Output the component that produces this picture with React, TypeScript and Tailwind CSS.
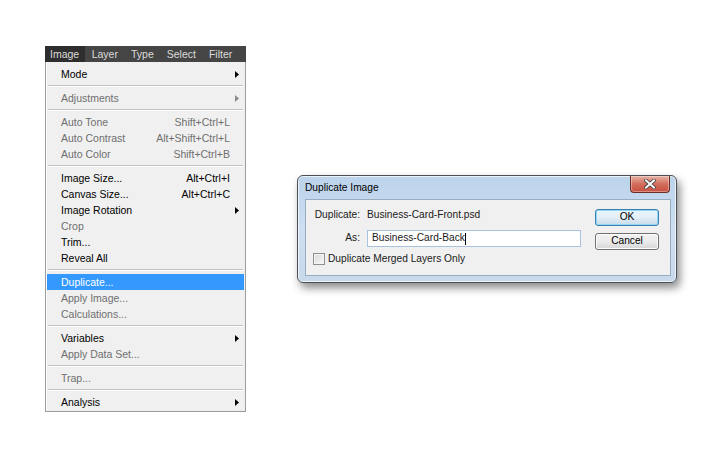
import React from "react";

type MenuItem =
  | { kind: "item"; label: string; shortcut?: string; sub?: boolean; disabled?: boolean; active?: boolean }
  | { kind: "sep" };

const item = (label: string, opts: Partial<Omit<Extract<MenuItem, { kind: "item" }>, "kind" | "label">> = {}): MenuItem => ({
  kind: "item",
  label,
  ...opts,
});
const sep: MenuItem = { kind: "sep" };

const ITEMS: MenuItem[] = [
  item("Mode", { sub: true }),
  sep,
  item("Adjustments", { sub: true, disabled: true }),
  sep,
  item("Auto Tone", { shortcut: "Shift+Ctrl+L", disabled: true }),
  item("Auto Contrast", { shortcut: "Alt+Shift+Ctrl+L", disabled: true }),
  item("Auto Color", { shortcut: "Shift+Ctrl+B", disabled: true }),
  sep,
  item("Image Size...", { shortcut: "Alt+Ctrl+I" }),
  item("Canvas Size...", { shortcut: "Alt+Ctrl+C" }),
  item("Image Rotation", { sub: true }),
  item("Crop", { disabled: true }),
  item("Trim..."),
  item("Reveal All"),
  sep,
  item("Duplicate...", { active: true }),
  item("Apply Image...", { disabled: true }),
  item("Calculations...", { disabled: true }),
  sep,
  item("Variables", { sub: true }),
  item("Apply Data Set...", { disabled: true }),
  sep,
  item("Trap...", { disabled: true }),
  sep,
  item("Analysis", { sub: true }),
];

const MENUBAR = ["Image", "Layer", "Type", "Select", "Filter"];

function Arrow({ muted }: { muted?: boolean }) {
  return (
    <svg width="4" height="7" viewBox="0 0 4 7" className="block">
      <path d="M0 0 L4 3.5 L0 7 Z" fill={muted ? "#8a8a8a" : "#000"} />
    </svg>
  );
}

function ImageMenu() {
  return (
    <div className="w-[201px] text-[10.5px] leading-none">
      {/* barra de menús */}
      <div className="flex h-4 items-stretch bg-[#454545] text-[#dcdcdc]">
        {MENUBAR.map((m, i) => (
          <div
            key={m}
            className={`flex items-center ${i === 0 ? "bg-[#2e2e2e] pl-[5px] pr-[6px]" : "px-[6.5px]"}`}
          >
            {m}
          </div>
        ))}
      </div>

      <div className="border-x border-b border-[#9c9c9c] bg-[#f0f0f0] pt-1 pb-[1px] shadow-[inset_1px_0_0_#fff]">
        {ITEMS.map((it, i) =>
          it.kind === "sep" ? (
            <div key={i} className="h-2 px-[2px] pt-[3px]">
              <div className="h-px bg-[#c4c4c4]" />
              <div className="h-px bg-white" />
            </div>
          ) : (
            <div
              key={i}
              className={`mx-px flex h-4 items-center pl-[14px] ${
                it.active ? "bg-[#3399ff] text-white" : it.disabled ? "text-[#6f6f6f]" : "text-black"
              }`}
            >
              <span className="flex-1">{it.label}</span>
              {it.shortcut && <span>{it.shortcut}</span>}
              <span className="flex w-[14px] justify-start pl-[5px]">{it.sub && <Arrow muted={it.disabled} />}</span>
            </div>
          )
        )}
      </div>
    </div>
  );
}

function DuplicateDialog() {
  return (
    <div className="flex h-[108px] w-[380px] flex-col rounded-[6px] border border-[#4a4f55] bg-gradient-to-b from-[#bcd3eb] via-[#cddff1] to-[#c8d9ec] text-[10.2px] leading-none shadow-[3px_5px_9px_rgba(0,0,0,0.45),inset_0_0_0_1px_rgba(255,255,255,0.7)]">
      {/* título */}
      <div className="flex h-[23px] items-start">
        <span className="ml-[7px] mt-[7px] text-black">Duplicate Image</span>
        <div className="ml-auto mr-[6px] flex h-[17px] w-[40px] items-center justify-center rounded-b-[4px] border border-t-0 border-[#6b2e26] bg-gradient-to-b from-[#e7b2a6] via-[#d26e5d] to-[#c94e3d] shadow-[inset_0_0_0_1px_rgba(255,255,255,0.35)]">
          <svg width="12" height="10" viewBox="0 0 12 10">
            <path d="M2 1.5 L10 8.5 M10 1.5 L2 8.5" stroke="#3a3a3a" strokeWidth="3.6" strokeLinecap="square" />
            <path d="M2 1.5 L10 8.5 M10 1.5 L2 8.5" stroke="#fff" strokeWidth="2" strokeLinecap="square" />
          </svg>
        </div>
      </div>

      {/* contenido */}
      <div className="mb-[6px] ml-[7px] mr-[5px] flex flex-1 border border-[#9aacc0] bg-[#f0f0f0] text-[#1a1a1a]">
        <div className="flex flex-col pl-[7px] pt-[8px]">
          <div className="grid grid-cols-[47px_auto] items-center gap-x-[7px]">
            <span className="h-[14px] text-right leading-[14px]">Duplicate:</span>
            <span className="h-[14px] leading-[14px]">Business-Card-Front.psd</span>
            <span className="mt-[8px] text-right">As:</span>
            <div className="mt-[8px] flex h-[17px] w-[214px] items-center border border-[#a8c3de] bg-white pl-[4px]">
              <span>Business-Card-Back</span>
              <span className="h-[12px] w-px bg-black" />
            </div>
          </div>
          <div className="mt-[6px] flex items-center gap-[3px]">
            <span className="h-[12px] w-[12px] border border-[#8e8f8f] bg-gradient-to-br from-[#d8d8d8] to-[#fafafa] shadow-[inset_0_0_0_1px_#f4f4f4]" />
            <span>Duplicate Merged Layers Only</span>
          </div>
        </div>

        <div className="ml-auto mr-[11px] flex flex-col gap-[7px] pt-[9px]">
          <div className="flex h-[17px] w-[64px] items-center justify-center rounded-[3px] border border-[#3c7fb1] bg-gradient-to-b from-[#eaf6fd] via-[#e3eef6] to-[#c7dceb] text-black shadow-[inset_0_0_0_1px_#8fd6f7]">
            OK
          </div>
          <div className="flex h-[17px] w-[64px] items-center justify-center rounded-[3px] border border-[#707070] bg-gradient-to-b from-[#f2f2f2] via-[#ebebeb] to-[#d6d6d6] text-black shadow-[inset_0_0_0_1px_#fcfcfc]">
            Cancel
          </div>
        </div>
      </div>
    </div>
  );
}

export default function App() {
  return (
    <div className="flex h-[458px] w-[725px] items-start overflow-hidden bg-white font-['Liberation_Sans',Arial,sans-serif]">
      <div className="ml-[45px] mt-[46px]">
        <ImageMenu />
      </div>
      <div className="ml-[51px] mt-[175px]">
        <DuplicateDialog />
      </div>
    </div>
  );
}
